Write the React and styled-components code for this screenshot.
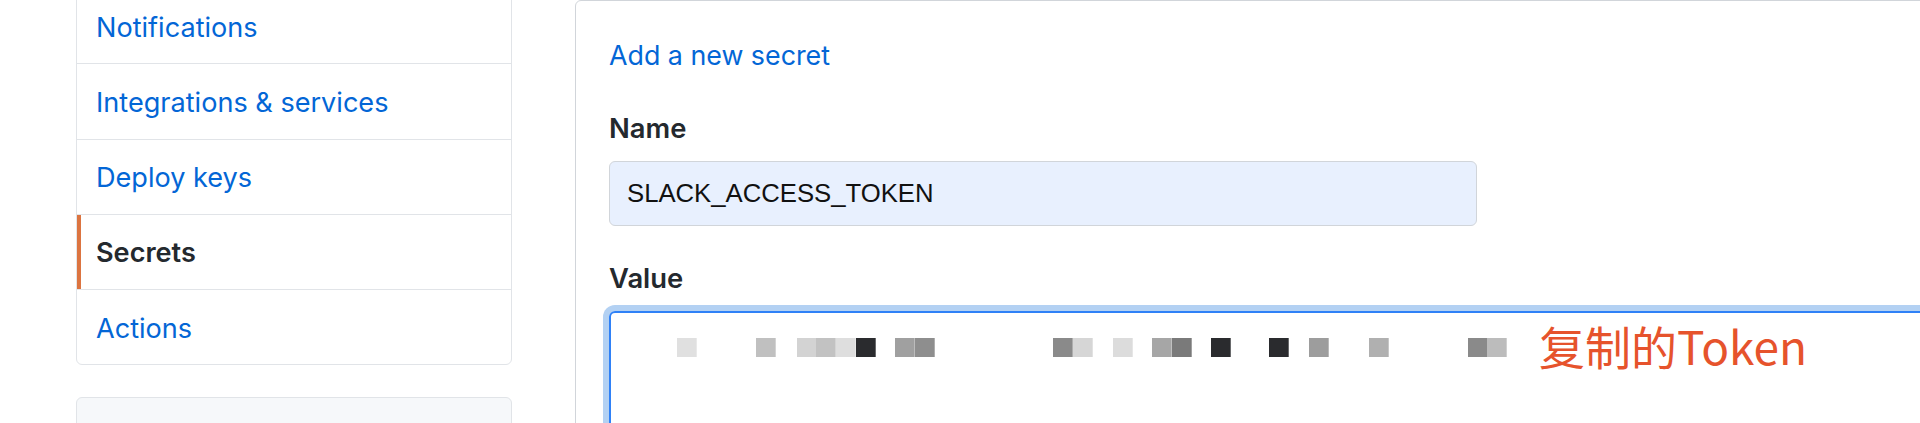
import React from 'react';
import styled, { createGlobalStyle } from 'styled-components';

const MENU = [
  ['Notifications', false],
  ['Integrations & services', false],
  ['Deploy keys', false],
  ['Secrets', true],
  ['Actions', false],
];

// mosaic over the pasted token: [x from content start, colour]
const MOSAIC = [
  [50, '#e0e0e0'],
  [129, '#c0c0c0'],
  [170, '#d3d3d3'],
  [189, '#c2c2c2'],
  [209, '#dedede'],
  [229, '#2a2b2e'],
  [268, '#a0a0a0'],
  [288, '#8e8e8e'],
  [426, '#8a8a8a'],
  [446, '#d6d6d6'],
  [486, '#dcdcdc'],
  [525, '#a6a6a6'],
  [545, '#7a7a7a'],
  [584, '#2a2b2e'],
  [642, '#2a2b2e'],
  [682, '#9d9d9d'],
  [742, '#b0b0b0'],
  [841, '#8a8a8a'],
  [860, '#bcbcbc'],
];

const GlobalStyle = createGlobalStyle`
  html, body {
    margin: 0;
    padding: 0;
    background: #fff;
  }
  body {
    font-family: Inter, "Noto Sans", sans-serif;
    color: #24292e;
  }
`;

const App = () => (
  <>
    <GlobalStyle />
    <Page>
      <Sidebar>
        <Menu>
          {MENU.map(([label, active]) => (
            <MenuItem key={label} $active={active}>
              {label}
            </MenuItem>
          ))}
        </Menu>
        <Card />
      </Sidebar>
      <Panel>
        <Title>Add a new secret</Title>
        <Label>Name</Label>
        <Input>SLACK_ACCESS_TOKEN</Input>
        <Label $top={32}>Value</Label>
        <TextArea>
          <svg width="880" height="19" viewBox="0 0 880 19">
            {MOSAIC.map(([x, c]) => (
              <rect key={x} x={x} y="0" width="19.7" height="19" fill={c} />
            ))}
          </svg>
          <Note>复制的Token</Note>
        </TextArea>
      </Panel>
    </Page>
  </>
);

const Page = styled.div`
  display: flex;
  align-items: flex-start;
  height: 423px;
  overflow: hidden;
  padding-left: 76px;
`;

const Sidebar = styled.div`
  flex: none;
  width: 436px;
  margin-top: -12px;
  display: flex;
  flex-direction: column;
  gap: 32px;
`;

const Menu = styled.ul`
  list-style: none;
  margin: 0;
  padding: 0;
  border: 1px solid #e1e4e8;
  border-radius: 6px;
`;

const MenuItem = styled.li`
  height: 72.25px;
  display: flex;
  align-items: center;
  padding: 2px 0 0 19px;
  font-size: 27.1px;
  font-weight: ${(p) => (p.$active ? 600 : 400)};
  color: ${(p) => (p.$active ? '#24292e' : '#0366d6')};
  box-shadow: ${(p) => (p.$active ? 'inset 4px 0 0 #dc7440' : 'none')};

  & + & {
    border-top: 1px solid #e1e4e8;
  }
`;

const Card = styled.div`
  height: 120px;
  background: #f6f8fa;
  border: 1px solid #e1e4e8;
  border-radius: 6px;
`;

const Panel = styled.div`
  flex: none;
  width: 1500px;
  margin-left: 63px;
  border: 1px solid #d1d5da;
  border-radius: 6px;
  padding: 34px 0 0 33px;
  display: flex;
  flex-direction: column;
  align-items: flex-start;
`;

const Title = styled.a`
  font-size: 26.8px;
  line-height: 41px;
  color: #0366d6;
  margin-bottom: 32px;
`;

const Label = styled.label`
  font-size: 27.4px;
  line-height: 41px;
  font-weight: 600;
  color: #24292e;
  margin-top: ${(p) => p.$top || 0}px;
  margin-bottom: 12px;
`;

const Input = styled.div`
  box-sizing: border-box;
  width: 868px;
  height: 65px;
  display: flex;
  align-items: center;
  padding-left: 17px;
  background: #e8f0fe;
  border: 1px solid #d1d5da;
  border-radius: 6px;
  font-family: "Liberation Sans", Arial, sans-serif;
  font-size: 25.7px;
  color: #111;
`;

const TextArea = styled.div`
  box-sizing: border-box;
  height: 200px;
  display: flex;
  align-items: flex-start;
  align-self: stretch;
  padding: 12px 0 0 16px;
  border: 2px solid #2f81f7;
  border-radius: 6px;
  box-shadow: 0 0 0 6px rgba(3, 102, 214, 0.3);

  svg {
    flex: none;
    margin-top: 13px;
  }
`;

const Note = styled.span`
  margin: -3px 0 0 32px;
  font-family: "Noto Sans CJK SC", "Noto Sans", sans-serif;
  font-size: 46px;
  line-height: 46px;
  color: #e6532c;
`;

export default App;
